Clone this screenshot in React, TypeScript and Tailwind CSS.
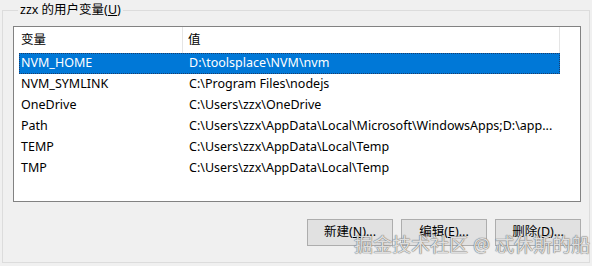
const rows = [
  { name: 'NVM_HOME', value: 'D:\\toolsplace\\NVM\\nvm' },
  { name: 'NVM_SYMLINK', value: 'C:\\Program Files\\nodejs' },
  { name: 'OneDrive', value: 'C:\\Users\\zzx\\OneDrive' },
  { name: 'Path', value: 'C:\\Users\\zzx\\AppData\\Local\\Microsoft\\WindowsApps;D:\\app...' },
  { name: 'TEMP', value: 'C:\\Users\\zzx\\AppData\\Local\\Temp' },
  { name: 'TMP', value: 'C:\\Users\\zzx\\AppData\\Local\\Temp' }
]

function WinButton({ label, accel }: { label: string; accel: string }) {
  return (
    <button className="flex h-[27px] w-[86px] items-center justify-center border border-[#adadad] bg-[#e1e1e1] text-[12.5px] text-black">
      {label}(<span className="underline">{accel}</span>)...
    </button>
  )
}

export default function App() {
  return (
    <div
      className="relative h-[266px] w-[592px] overflow-hidden bg-[#f0f0f0] pt-[2px] text-[12.5px] text-black"
      style={{ fontFamily: '"Noto Sans", "Noto Sans CJK SC", sans-serif' }}
    >
      <fieldset className="ml-[2px] h-[261px] w-[585px] border border-[#dcdcdc] pl-[10px] pr-[8px] pt-[8px]">
        <legend className="ml-[5px] px-[2px] leading-[16px]">
          zzx 的用户变量(<span className="underline">U</span>)
        </legend>

        <div className="h-[176px] w-[568px] border border-[#828282] bg-white">
          <div className="flex h-[26px] items-center">
            <div className="flex h-full w-[169px] items-center border-r border-[#e5e5e5] pl-[7px]">变量</div>
            <div className="flex h-full w-[377px] items-center border-r border-[#e5e5e5] pl-[5px]">值</div>
          </div>
          <div className="flex flex-col">
            {rows.map((row, i) => (
              <div key={row.name} className="flex h-[21px] items-center pl-[5px]">
                <div
                  className={`flex h-full w-[541px] items-center ${
                    i === 0 ? 'border border-dotted border-[#1b3d6b] bg-[#0078d7] text-white' : ''
                  }`}
                >
                  <span className={`whitespace-nowrap ${i === 0 ? 'w-[169px] pl-[1px]' : 'w-[170px] pl-[2px]'}`}>{row.name}</span>
                  <span className="whitespace-nowrap">{row.value}</span>
                </div>
              </div>
            ))}
          </div>
        </div>

        <div className="mt-[17px] flex justify-end gap-[8px]">
          <WinButton label="新建" accel="N" />
          <WinButton label="编辑" accel="E" />
          <WinButton label="删除" accel="D" />
        </div>
      </fieldset>

      <div
        className="absolute bottom-[7px] right-[2px] whitespace-nowrap text-[19px] text-[#f4f4f4]/85"
        style={{ textShadow: '0 0 1px #666, 0 0 1px #666' }}
      >
        掘金技术社区 @ 忒休斯的船
      </div>
    </div>
  )
}
